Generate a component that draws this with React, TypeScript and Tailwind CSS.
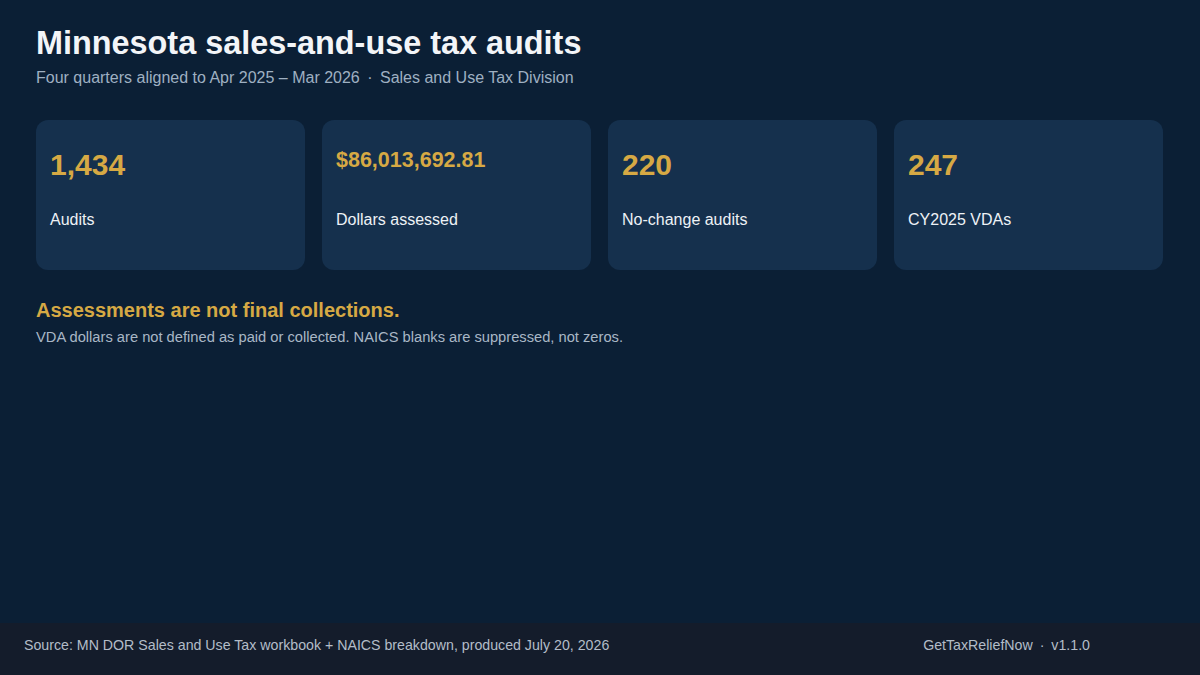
import React from "react";

const cards = [
  { value: "1,434", label: "Audits", small: false },
  { value: "$86,013,692.81", label: "Dollars assessed", small: true },
  { value: "220", label: "No-change audits", small: false },
  { value: "247", label: "CY2025 VDAs", small: false },
];

export default function App() {
  return (
    <div
      className="w-[1200px] h-[675px] bg-[#0b1f35] flex flex-col overflow-hidden"
      style={{ fontFamily: '"Liberation Sans", Arial, sans-serif' }}
    >
      <main className="flex-1 px-9 pt-[24px]">
        <h1 className="text-[32.4px] leading-[38px] font-bold text-[#f3f5f8]">
          Minnesota sales-and-use tax audits
        </h1>
        <p className="mt-[6px] text-[16px] leading-[20px] text-[#9fb0c2]">
          Four quarters aligned to Apr 2025 – Mar 2026 <span className="mx-[3px]">·</span> Sales and Use Tax Division
        </p>
        <div className="mt-[32px] grid grid-cols-4 gap-[17px] pr-[1px]">
          {cards.map((c) => (
            <div
              key={c.label}
              className="h-[150px] rounded-xl bg-[#15304d] px-[14px] pt-[26px] flex flex-col"
            >
              <div className="h-[64px]">
                {c.small ? (
                  <div className="text-[21.5px] leading-[28px] font-bold text-[#d6a944]">{c.value}</div>
                ) : (
                  <div className="text-[30px] leading-[38px] font-bold text-[#d6a944]">{c.value}</div>
                )}
              </div>
              <div className="text-[16px] leading-[20px] text-[#eef2f6]">{c.label}</div>
            </div>
          ))}
        </div>
        <h2 className="mt-[28px] text-[20px] leading-[24px] font-bold text-[#d6a944]">
          Assessments are not final collections.
        </h2>
        <p className="mt-[6px] text-[14.7px] leading-[18px] text-[#a9b7c6]">
          VDA dollars are not defined as paid or collected. NAICS blanks are suppressed, not zeros.
        </p>
      </main>
      <footer className="h-[52px] bg-[#141c2b] flex items-start justify-between pt-[13px] pl-6 pr-[110px] text-[14.2px] leading-[18px] text-[#b3bcc8]">
        <span>Source: MN DOR Sales and Use Tax workbook + NAICS breakdown, produced July 20, 2026</span>
        <span>
          GetTaxReliefNow <span className="mx-[3px]">·</span> v1.1.0
        </span>
      </footer>
    </div>
  );
}
